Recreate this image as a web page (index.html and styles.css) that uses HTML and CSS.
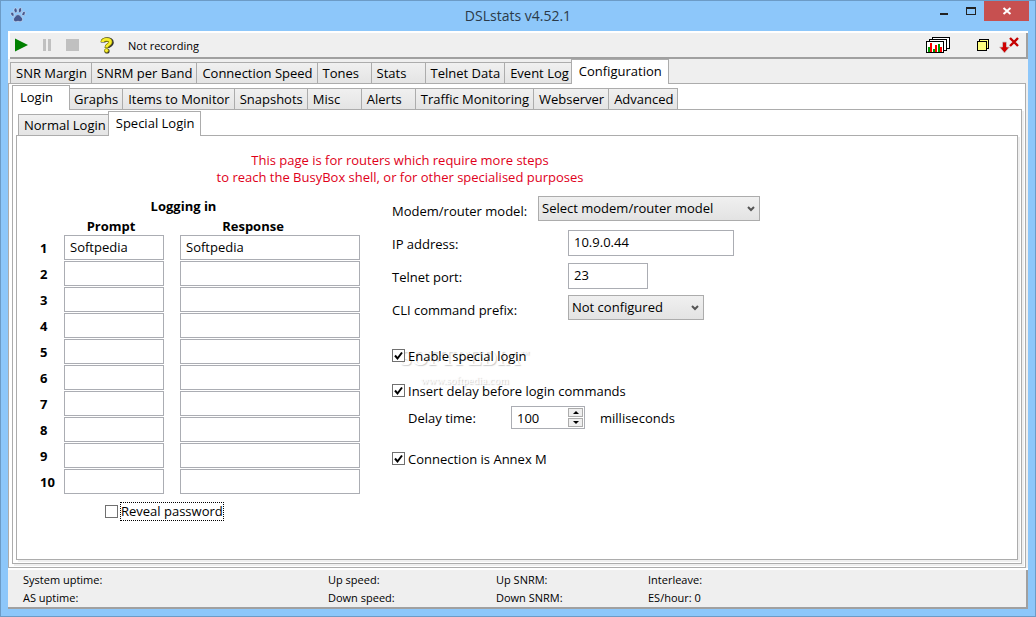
FILE: index.html
```
<!DOCTYPE html>
<html lang="en">
<head>
    <meta charset="UTF-8">
    <meta name="viewport" content="width=device-width, initial-scale=1.0">
    <title>DSLstats v4.52.1</title>
    <link rel="stylesheet" href="styles.css">
</head>
<body>
<div class="window">
    <header class="titlebar">
        <svg class="paw" width="16" height="16" viewBox="0 0 16 16">
            <g fill="#46588f" stroke="#d5e3f5" stroke-width="0.6">
                <ellipse cx="2.4" cy="7.2" rx="1.5" ry="2.2" transform="rotate(-25 2.4 7.2)"/>
                <ellipse cx="5.6" cy="3.4" rx="1.6" ry="2.5" transform="rotate(-8 5.6 3.4)"/>
                <ellipse cx="10" cy="3.2" rx="1.6" ry="2.5" transform="rotate(10 10 3.2)"/>
                <ellipse cx="13.6" cy="6.6" rx="1.5" ry="2.2" transform="rotate(25 13.6 6.6)"/>
                <path d="M8 7.6c2 0 2.4 1.6 3.7 2.8 1.5 1.4 1.2 3.9-.8 4.2-1.2.2-1.8-.3-2.9-.3s-1.6.6-2.7.4c-2.1-.3-2.5-2.6-1-4.1C5.600 9.300 6 7.600 8 7.600z"/>
            </g>
        </svg>
        <h1 class="title">DSLstats v4.52.1</h1>
        <div class="window-buttons">
            <button class="win-btn" aria-label="Minimize">
                <svg width="12" height="12" viewBox="0 0 12 12"><path d="M2 8h8v2H2z" fill="#222"/></svg>
            </button>
            <button class="win-btn" aria-label="Maximize">
                <svg width="12" height="12" viewBox="0 0 12 12"><path fill="#222" fill-rule="evenodd" d="M1 2h10v8H1zM2 4v5h8V4z"/></svg>
            </button>
            <button class="win-btn close" aria-label="Close">
                <svg width="12" height="12" viewBox="0 0 12 12"><path d="M2.500 3l7 6M9.500 3l-7 6" stroke="#fff" stroke-width="2"/></svg>
            </button>
        </div>
    </header>

    <div class="client">
        <div class="toolbar">
            <button class="tool" aria-label="Start">
                <svg width="14" height="14" viewBox="0 0 14 14"><path d="M1 0.500l13 6.500-13 6.500z" fill="#008000"/></svg>
            </button>
            <button class="tool" aria-label="Pause">
                <svg width="14" height="14" viewBox="0 0 14 14"><path d="M3 1h3v12H3zM8 1h3v12H8z" fill="#c0c0c0"/></svg>
            </button>
            <button class="tool" aria-label="Stop">
                <svg width="14" height="14" viewBox="0 0 14 14"><path d="M0 1h13v12H0z" fill="#c0c0c0"/></svg>
            </button>
            <button class="tool help" aria-label="Help">
                <svg width="14" height="17" viewBox="0 0 14 17">
                    <path d="M3 5.500C3 1.500 11.500 1.500 11.500 5.500c0 3-4.500 2.500-4.500 5.500" fill="none" stroke="#333" stroke-width="4.600"/>
                    <circle cx="7" cy="14" r="2.600" fill="#333"/>
                    <path d="M2.500 5C2.500 1.500 10.500 1.500 10.500 5c0 3-4 2.500-4 5.500" fill="none" stroke="#8f8800" stroke-width="4"/>
                    <path d="M2.500 5C2.500 1.500 10.500 1.500 10.500 5c0 3-4 2.500-4 5.500" fill="none" stroke="#f8ee30" stroke-width="2.600"/>
                    <circle cx="6.500" cy="13.500" r="2" fill="#f8ee30" stroke="#8f8800" stroke-width="0.700"/>
                </svg>
            </button>
            <span class="recording">Not recording</span>
            <button class="tool charts" aria-label="Graph snapshots">
                <svg width="24" height="16" viewBox="0 0 24 16" shape-rendering="crispEdges">
                    <g fill="#fff" stroke="#000">
                        <path d="M6.500 0.500h17v11h-17z"/>
                        <path d="M3.500 2.500h17v11h-17z"/>
                        <path d="M0.500 4.500h17v11h-17z"/>
                    </g>
                    <path d="M2 10h2v5H2zM7 12h2v3H7zM12 7h2v8h-2z" fill="#009a00"/>
                    <path d="M4 6h2v9H4zM9 8h2v7H9zM14 10h2v5h-2z" fill="#f00"/>
                </svg>
            </button>
            <button class="tool" aria-label="Copy window">
                <svg width="12" height="12" viewBox="0 0 12 12" shape-rendering="crispEdges">
                    <g fill="#ffff80" stroke="#000"><path d="M2.500 0.500h9v9h-9z"/><path d="M0.500 2.500h9v9h-9z"/></g>
                </svg>
            </button>
            <button class="tool" aria-label="Disconnect and exit">
                <svg width="20" height="17" viewBox="0 0 20 17">
                    <path d="M3.500 5h4v5h3L5.500 16 0.500 10h3z" fill="#d00000" stroke="#c8c8c8" stroke-width="0.800"/>
                    <path d="M11 1l8 8M19 1l-8 8" stroke="#c40000" stroke-width="2.400"/>
                </svg>
            </button>
        </div>

        <nav class="tabs" role="tablist">
            <button class="tab" role="tab">SNR Margin</button>
            <button class="tab" role="tab">SNRM per Band</button>
            <button class="tab" role="tab">Connection Speed</button>
            <button class="tab" role="tab">Tones</button>
            <button class="tab" role="tab">Stats</button>
            <button class="tab" role="tab">Telnet Data</button>
            <button class="tab" role="tab">Event Log</button>
            <button class="tab active" role="tab" aria-selected="true">Configuration</button>
        </nav>
        <div class="page">
            <nav class="tabs" role="tablist">
                <button class="tab active" role="tab" aria-selected="true">Login</button>
                <button class="tab" role="tab">Graphs</button>
                <button class="tab" role="tab">Items to Monitor</button>
                <button class="tab" role="tab">Snapshots</button>
                <button class="tab" role="tab">Misc</button>
                <button class="tab" role="tab">Alerts</button>
                <button class="tab" role="tab">Traffic Monitoring</button>
                <button class="tab" role="tab">Webserver</button>
                <button class="tab" role="tab">Advanced</button>
            </nav>
            <div class="page">
                <nav class="tabs" role="tablist">
                    <button class="tab" role="tab">Normal Login</button>
                    <button class="tab active" role="tab" aria-selected="true">Special Login</button>
                </nav>
                <main class="page content">
                    <p class="notice">This page is for routers which require more steps<br>to reach the BusyBox shell, or for other specialised purposes</p>
                    <div class="columns">
                        <section class="logging">
                            <table class="steps">
                                <caption>Logging in</caption>
                                <thead>
                                    <tr><td></td><th scope="col">Prompt</th><th scope="col">Response</th></tr>
                                </thead>
                                <tbody>
                                    <tr><th scope="row">1</th><td><input class="prompt" type="text" aria-label="Prompt 1" value="Softpedia"></td><td><input class="response" type="text" aria-label="Response 1" value="Softpedia"></td></tr>
                                    <tr><th scope="row">2</th><td><input class="prompt" type="text" aria-label="Prompt 2"></td><td><input class="response" type="text" aria-label="Response 2"></td></tr>
                                    <tr><th scope="row">3</th><td><input class="prompt" type="text" aria-label="Prompt 3"></td><td><input class="response" type="text" aria-label="Response 3"></td></tr>
                                    <tr><th scope="row">4</th><td><input class="prompt" type="text" aria-label="Prompt 4"></td><td><input class="response" type="text" aria-label="Response 4"></td></tr>
                                    <tr><th scope="row">5</th><td><input class="prompt" type="text" aria-label="Prompt 5"></td><td><input class="response" type="text" aria-label="Response 5"></td></tr>
                                    <tr><th scope="row">6</th><td><input class="prompt" type="text" aria-label="Prompt 6"></td><td><input class="response" type="text" aria-label="Response 6"></td></tr>
                                    <tr><th scope="row">7</th><td><input class="prompt" type="text" aria-label="Prompt 7"></td><td><input class="response" type="text" aria-label="Response 7"></td></tr>
                                    <tr><th scope="row">8</th><td><input class="prompt" type="text" aria-label="Prompt 8"></td><td><input class="response" type="text" aria-label="Response 8"></td></tr>
                                    <tr><th scope="row">9</th><td><input class="prompt" type="text" aria-label="Prompt 9"></td><td><input class="response" type="text" aria-label="Response 9"></td></tr>
                                    <tr><th scope="row">10</th><td><input class="prompt" type="text" aria-label="Prompt 10"></td><td><input class="response" type="text" aria-label="Response 10"></td></tr>
                                </tbody>
                            </table>
                            <div class="check reveal">
                                <input type="checkbox" id="reveal">
                                <label class="focused" for="reveal">Reveal password</label>
                            </div>
                        </section>

                        <section class="settings">
                            <div class="field">
                                <label for="model">Modem/router model:</label>
                                <select id="model" class="model"><option>Select modem/router model</option></select>
                            </div>
                            <div class="field indent">
                                <label for="ip">IP address:</label>
                                <input id="ip" class="ip" type="text" value="10.9.0.44">
                            </div>
                            <div class="field indent">
                                <label for="port">Telnet port:</label>
                                <input id="port" class="port" type="text" value="23">
                            </div>
                            <div class="field indent">
                                <label for="prefix">CLI command prefix:</label>
                                <select id="prefix" class="prefix"><option>Not configured</option></select>
                            </div>

                            <div class="options">
                                <div class="watermark">
                                    <span class="brand">SOFTPEDIA<sup>™</sup></span>
                                    <span class="site">www.softpedia.com</span>
                                </div>
                                <div class="check">
                                    <input type="checkbox" id="special" checked>
                                    <label for="special">Enable special login</label>
                                </div>
                                <div class="check">
                                    <input type="checkbox" id="insert" checked>
                                    <label for="insert">Insert delay before login commands</label>
                                </div>
                                <div class="delay">
                                    <label for="delay">Delay time:</label>
                                    <div class="spinner">
                                        <input id="delay" type="number" value="100">
                                        <div class="arrows">
                                            <button aria-label="Increase"><svg width="6" height="3" viewBox="0 0 6 3"><path d="M0 3l3-3 3 3z"/></svg></button>
                                            <button aria-label="Decrease"><svg width="6" height="3" viewBox="0 0 6 3"><path d="M0 0h6L3 3z"/></svg></button>
                                        </div>
                                    </div>
                                    <span class="unit">milliseconds</span>
                                </div>
                                <div class="check">
                                    <input type="checkbox" id="annex" checked>
                                    <label for="annex">Connection is Annex M</label>
                                </div>
                            </div>
                        </section>
                    </div>
                </main>
            </div>
        </div>

        <footer class="statusbar">
            <div class="status"><span>System uptime:</span><span>AS uptime:</span></div>
            <div class="status"><span>Up speed:</span><span>Down speed:</span></div>
            <div class="status"><span>Up SNRM:</span><span>Down SNRM:</span></div>
            <div class="status"><span>Interleave:</span><span>ES/hour: 0</span></div>
        </footer>
    </div>
</div>
</body>
</html>
```
FILE: styles.css
```
* {
    box-sizing: border-box;
}
body {
    margin: 0;
    font-family: "Open Sans", "Noto Sans", sans-serif;
    font-size: 13px;
    line-height: 17px;
    color: #000;
}
button, input, select {
    font: inherit;
    color: inherit;
    margin: 0;
}
button {
    padding: 0;
    border: none;
    background: none;
}
.window {
    display: flex;
    flex-direction: column;
    min-height: 100vh;
    padding: 0 7px 7px;
    background: #8dc7fa;
    border: 1px solid #6c9bc6;
}

/* title bar */
.titlebar {
    display: grid;
    grid-template-columns: 1fr auto 1fr;
    align-items: center;
    height: 30px;
    padding-bottom: 2px;
}
.paw {
    margin-left: 2px;
}
.title {
    margin: 0;
    font-size: 14px;
    font-weight: normal;
    color: #2b3a48;
}
.window-buttons {
    display: flex;
    align-self: start;
    justify-content: flex-end;
    margin-right: -1px;
}
.win-btn {
    display: flex;
    align-items: center;
    justify-content: center;
    width: 27px;
    height: 20px;
}
.win-btn.close {
    width: 45px;
    background: #c75050;
}

/* toolbar */
.client {
    display: flex;
    flex-direction: column;
    flex: 1;
    background: #efefef;
}
.toolbar {
    display: flex;
    align-items: center;
    height: 28px;
    padding-right: 6px;
    box-shadow: inset 2px 2px #fff, inset -2px -2px #a0a0a0;
}
.tool {
    display: flex;
    align-items: center;
    justify-content: center;
    width: 26px;
    height: 24px;
}
.tool.help {
    margin-left: 8px;
}
.tool.charts {
    margin-left: auto;
    margin-right: 19px;
}
.recording {
    margin-left: 8px;
    font-size: 11px;
}

/* tabs */
.tabs {
    display: flex;
    align-items: flex-end;
    height: 24px;
    padding-left: 2px;
}
.tab {
    height: 21px;
    min-width: 54px;
    padding: 0 4px 0 5px;
    text-align: left;
    white-space: nowrap;
    background: linear-gradient(#f0f0f0, #e4e4e4);
    border: 1px solid #acacac;
    border-width: 1px 0 0 1px;
}
.tab:last-child {
    border-right-width: 1px;
}
.tab.active {
    position: relative;
    height: 25px;
    min-width: 58px;
    margin: 0 -2px -1px;
    padding: 0 6px 1px 7px;
    background: #fff;
    border-right-width: 1px;
}
.page {
    display: flex;
    flex-direction: column;
    flex: 1;
    margin-right: 2px;
    padding: 1px 3px 3px;
    background: #fff;
    border: 1px solid #acacac;
    box-shadow: 2px 2px #efefef;
}
.page .page {
    margin-right: 0;
}

/* special login page */
.content {
    padding: 16px 20px;
}
.notice {
    width: 726px;
    margin: 0;
    text-align: center;
    color: #e0001a;
}
.columns {
    display: flex;
    gap: 32px;
    margin-top: 8px;
}
.logging {
    padding-top: 4px;
}
.steps {
    border-collapse: collapse;
}
.steps caption {
    padding: 0 30px 2px 0;
    font-weight: bold;
}
.steps th, .steps td {
    padding: 0 0 1px;
}
.steps th[scope="row"] {
    width: 27px;
    padding: 1px 0 0 3px;
    text-align: left;
}
.steps th[scope="col"] {
    height: 18px;
    padding: 0 34px 0 0;
}
.steps th[scope="col"]:nth-child(2) {
    padding-right: 22px;
}
.steps td:nth-child(2) {
    width: 116px;
}
input[type="text"] {
    display: block;
    height: 26px;
    padding: 0 5px 1px;
    background: #fff;
    border: 1px solid #abadb3;
}
.steps input {
    height: 25px;
}
.prompt {
    width: 100px;
}
.response {
    width: 180px;
}
.check {
    display: flex;
    align-items: center;
    gap: 3px;
}
.check input {
    appearance: none;
    width: 13px;
    height: 13px;
    border: 1px solid #707070;
    background: #fff;
}
.check input:checked {
    background: #fff url("data:image/svg+xml,%3Csvg xmlns='http://www.w3.org/2000/svg' viewBox='0 0 11 11'%3E%3Cpath d='M2 5.500l2.500 3L9 2.500' fill='none' stroke='%23000' stroke-width='2'/%3E%3C/svg%3E");
}
.check.reveal {
    gap: 2px;
    margin: 7px 0 0 68px;
}
.focused {
    border: 1px dotted #000;
}

/* right column */
.field {
    display: flex;
    align-items: center;
    height: 33px;
}
.field label {
    width: 146px;
    padding-top: 2px;
}
.field.indent label {
    width: 176px;
}
.field input {
    margin-bottom: 2px;
}
select {
    appearance: none;
    height: 25px;
    margin-bottom: 4px;
    padding: 0 3px;
    border: 1px solid #acacac;
    border-radius: 0;
    background: url("data:image/svg+xml,%3Csvg xmlns='http://www.w3.org/2000/svg' width='8' height='6'%3E%3Cpath d='M1 1l3 3 3-3' fill='none' stroke='%23555' stroke-width='2'/%3E%3C/svg%3E") right 4px center no-repeat, linear-gradient(#f0f0f0, #e3e3e3);
}
.model {
    width: 222px;
}
.ip {
    width: 166px;
}
.port {
    width: 80px;
}
.prefix {
    width: 136px;
}
.options {
    position: relative;
    margin-top: 20px;
}
.options label, .unit {
    padding-top: 2px;
}
.options .check + .check {
    margin-top: 16px;
}
.delay {
    display: flex;
    align-items: center;
    margin: 6px 0 20px 16px;
}
.delay label {
    width: 103px;
}
.spinner {
    display: flex;
    width: 74px;
    height: 23px;
    margin-right: 15px;
    padding: 1px;
    border: 1px solid #abadb3;
}
.spinner input {
    appearance: textfield;
    flex: 1;
    min-width: 0;
    padding: 1px 4px 0;
    border: none;
}
.arrows {
    display: flex;
    flex-direction: column;
    gap: 1px;
    width: 15px;
}
.arrows button {
    display: flex;
    flex: 1;
    align-items: center;
    justify-content: center;
    background: #efefef;
    border: 1px solid #acacac;
}
.options .check, .delay {
    position: relative;
}
.watermark {
    position: absolute;
    top: 0;
    left: 8px;
    display: flex;
    flex-direction: column;
    align-items: center;
    color: #fff;
    opacity: 0.6;
    text-shadow: 1px 1px 1px #aaa;
    pointer-events: none;
}
.brand {
    font: bold 21px/24px "Liberation Serif", serif;
}
.brand sup {
    font-size: 9px;
    line-height: 9px;
}
.site {
    margin-top: 2px;
    font: 11px/17px "Liberation Serif", serif;
}

/* status bar */
.statusbar {
    display: grid;
    grid-template-columns: 305px 168px 152px 1fr;
    height: 41px;
    padding: 3px 15px 0;
    font-size: 11px;
    line-height: 18px;
    box-shadow: inset 0 2px #fff, inset -2px -2px #a0a0a0;
}
.status {
    display: flex;
    flex-direction: column;
}
```
